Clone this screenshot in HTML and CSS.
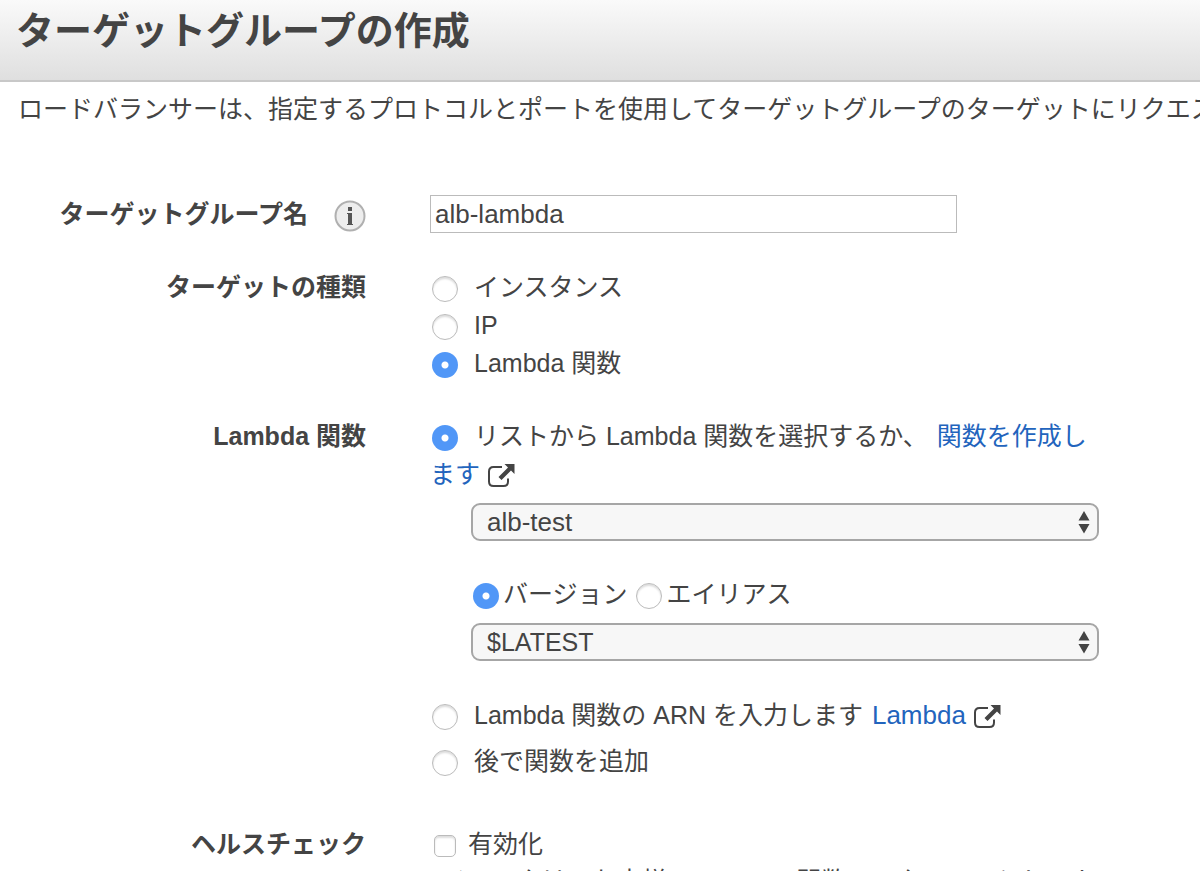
FILE: index.html
```html
<!DOCTYPE html>
<html lang="ja">
<head>
  <meta charset="UTF-8" />
  <meta name="viewport" content="width=device-width, initial-scale=1.0" />
  <title>ターゲットグループの作成</title>
  <link rel="stylesheet" href="styles.css">
</head>
<body>
  <header class="dialog-header">
    <h1>ターゲットグループの作成</h1>
  </header>

  <p class="description">ロードバランサーは、指定するプロトコルとポートを使用してターゲットグループのターゲットにリクエス</p>

  <form class="target-form">
    <div class="form-row">
      <div class="row-label with-info">
        <label for="groupName">ターゲットグループ名</label>
        <button type="button" class="info-btn" aria-label="情報">
          <svg viewBox="0 0 32 32" width="32" height="32">
            <circle cx="16" cy="16" r="14.5" fill="#ededed" stroke="#b0b0b0" stroke-width="2" />
            <rect x="14" y="7" width="4" height="4" fill="#555" />
            <path d="M13 13h5v11h1v1h-6v-1h1v-10h-1z" fill="#555" />
          </svg>
        </button>
      </div>
      <div class="field">
        <input type="text" id="groupName" class="text-input" value="alb-lambda">
      </div>
    </div>

    <div class="form-row" role="radiogroup" aria-labelledby="typeLabel">
      <div class="row-label" id="typeLabel">ターゲットの種類</div>
      <div class="field">
        <div class="option"><input type="radio" name="targetType" id="typeInstance"><label for="typeInstance">インスタンス</label></div>
        <div class="option"><input type="radio" name="targetType" id="typeIp"><label for="typeIp">IP</label></div>
        <div class="option"><input type="radio" name="targetType" id="typeLambda" checked><label for="typeLambda">Lambda 関数</label></div>
      </div>
    </div>

    <div class="form-row" role="radiogroup" aria-labelledby="lambdaLabel">
      <div class="row-label" id="lambdaLabel">Lambda 関数</div>
      <div class="field">
        <div class="option"><input type="radio" name="lambdaSource" id="sourceList" checked><label for="sourceList">リストから Lambda 関数を選択するか、</label> <a href="#">関数を作成します</a>
          <svg class="external" viewBox="0 0 28 26" width="28" height="26">
            <path d="M15 4H6.500Q2 4 2 8.500V18.500Q2 23 6.500 23H16.500Q21 23 21 18.500V15.500" fill="none" stroke="#444" stroke-width="2" />
            <path d="M17.500 1H27.500V11L24 7.600L14.500 17L11.500 14L21 4.500z" fill="#444" />
          </svg>
        </div>
        <div class="nested">
          <div class="select-box">
            <select aria-label="Lambda 関数">
              <option>alb-test</option>
            </select>
            <svg class="arrows" viewBox="0 0 12 24" width="12" height="24">
              <path d="M6 1L11.500 10.500H.500zM6 23.500L.500 14H11.500z" fill="#444" />
            </svg>
          </div>
          <div class="inline-options">
            <input type="radio" name="qualifier" id="qualVersion" checked><label for="qualVersion">バージョン</label>
            <input type="radio" name="qualifier" id="qualAlias"><label for="qualAlias">エイリアス</label>
          </div>
          <div class="select-box">
            <select aria-label="バージョン" class="version">
              <option>$LATEST</option>
            </select>
            <svg class="arrows" viewBox="0 0 12 24" width="12" height="24">
              <path d="M6 1L11.500 10.500H.500zM6 23.500L.500 14H11.500z" fill="#444" />
            </svg>
          </div>
        </div>
        <div class="option spaced"><input type="radio" name="lambdaSource" id="sourceArn"><label for="sourceArn">Lambda 関数の ARN を入力します</label> <a href="#" class="latin">Lambda</a>
          <svg class="external" viewBox="0 0 28 26" width="28" height="26">
            <path d="M15 4H6.500Q2 4 2 8.500V18.500Q2 23 6.500 23H16.500Q21 23 21 18.500V15.500" fill="none" stroke="#444" stroke-width="2" />
            <path d="M17.500 1H27.500V11L24 7.600L14.500 17L11.500 14L21 4.500z" fill="#444" />
          </svg>
        </div>
        <div class="option"><input type="radio" name="lambdaSource" id="sourceLater"><label for="sourceLater">後で関数を追加</label></div>
      </div>
    </div>

    <div class="form-row health">
      <div class="row-label">ヘルスチェック</div>
      <div class="field">
        <div class="option"><input type="checkbox" id="healthCheck"><label for="healthCheck">有効化</label></div>
        <p class="hint">チェックは、お客様の Lambda 関数のリクエストとしてカウントされます</p>
      </div>
    </div>
  </form>
</body>
</html>
```

FILE: styles.css
```css
* {
  box-sizing: border-box;
}
body {
  margin: 0;
  font-family: "Liberation Sans", "Noto Sans CJK JP", sans-serif;
  font-size: 25px;
  line-height: 38px;
  color: #444;
  background-color: #fff;
  overflow: hidden;
}
.dialog-header {
  padding: 4px 16px 22px;
  background: linear-gradient(#fafafa, #dfdfdf);
  border-bottom: 2px solid #c8c8c8;
}
h1 {
  margin: 0;
  font-size: 38px;
  line-height: 54px;
  font-weight: bold;
}
.description {
  margin: 8px 0 67px;
  padding-left: 18px;
  white-space: nowrap;
}
.target-form {
  display: flex;
  flex-direction: column;
  gap: 35px;
}
.form-row {
  display: grid;
  grid-template-columns: 366px minmax(0, 669px);
  column-gap: 64px;
}
.row-label {
  font-weight: bold;
  text-align: right;
}
.with-info {
  display: flex;
  align-items: center;
  justify-content: flex-end;
  gap: 26px;
}
.info-btn {
  display: flex;
  padding: 4px 0 0;
  border: none;
  background: none;
  cursor: pointer;
}
.text-input {
  display: block;
  width: 527px;
  max-width: 100%;
  height: 38px;
  padding: 0 4px;
  border: 1px solid #bbb;
  border-radius: 0;
  font-family: inherit;
  font-size: 26px;
  color: #444;
}
.latin {
  font-size: 26px;
}
input[type="radio"],
input[type="checkbox"] {
  appearance: none;
  width: 26px;
  height: 26px;
  margin: 0 16px 0 2px;
  border: 1px solid #bbb;
  border-radius: 50%;
  background-color: #fff;
  box-shadow: inset 0 2px 2px #ddd;
  vertical-align: middle;
}
input[type="radio"]:checked {
  border: none;
  background: radial-gradient(circle, #fff 3px, #5197f7 4px);
  box-shadow: none;
}
input[type="checkbox"] {
  width: 22px;
  height: 22px;
  margin: 0 12px 0 4px;
  border-radius: 5px;
}
a {
  color: #2264bd;
  text-decoration: none;
}
label + a {
  margin-left: 2px;
}
.external {
  vertical-align: middle;
}
.nested {
  padding: 10px 0 0 41px;
}
.select-box {
  position: relative;
}
select {
  appearance: none;
  display: block;
  width: 100%;
  height: 38px;
  padding: 0 14px;
  border: 2px solid #a6a6a6;
  border-radius: 9px;
  background-color: #f7f7f7;
  font-family: inherit;
  font-size: 26px;
  color: #444;
}
select.version {
  font-size: 25px;
}
.arrows {
  position: absolute;
  top: 7px;
  right: 9px;
  pointer-events: none;
}
.inline-options {
  padding: 34px 0 10px;
}
.inline-options input[type="radio"] {
  margin-right: 4px;
}
.spaced {
  margin: 35px 0 8px;
}
.health {
  margin-top: 10px;
}
.hint {
  margin: 0;
  padding-left: 12px;
  line-height: 36px;
}
```
